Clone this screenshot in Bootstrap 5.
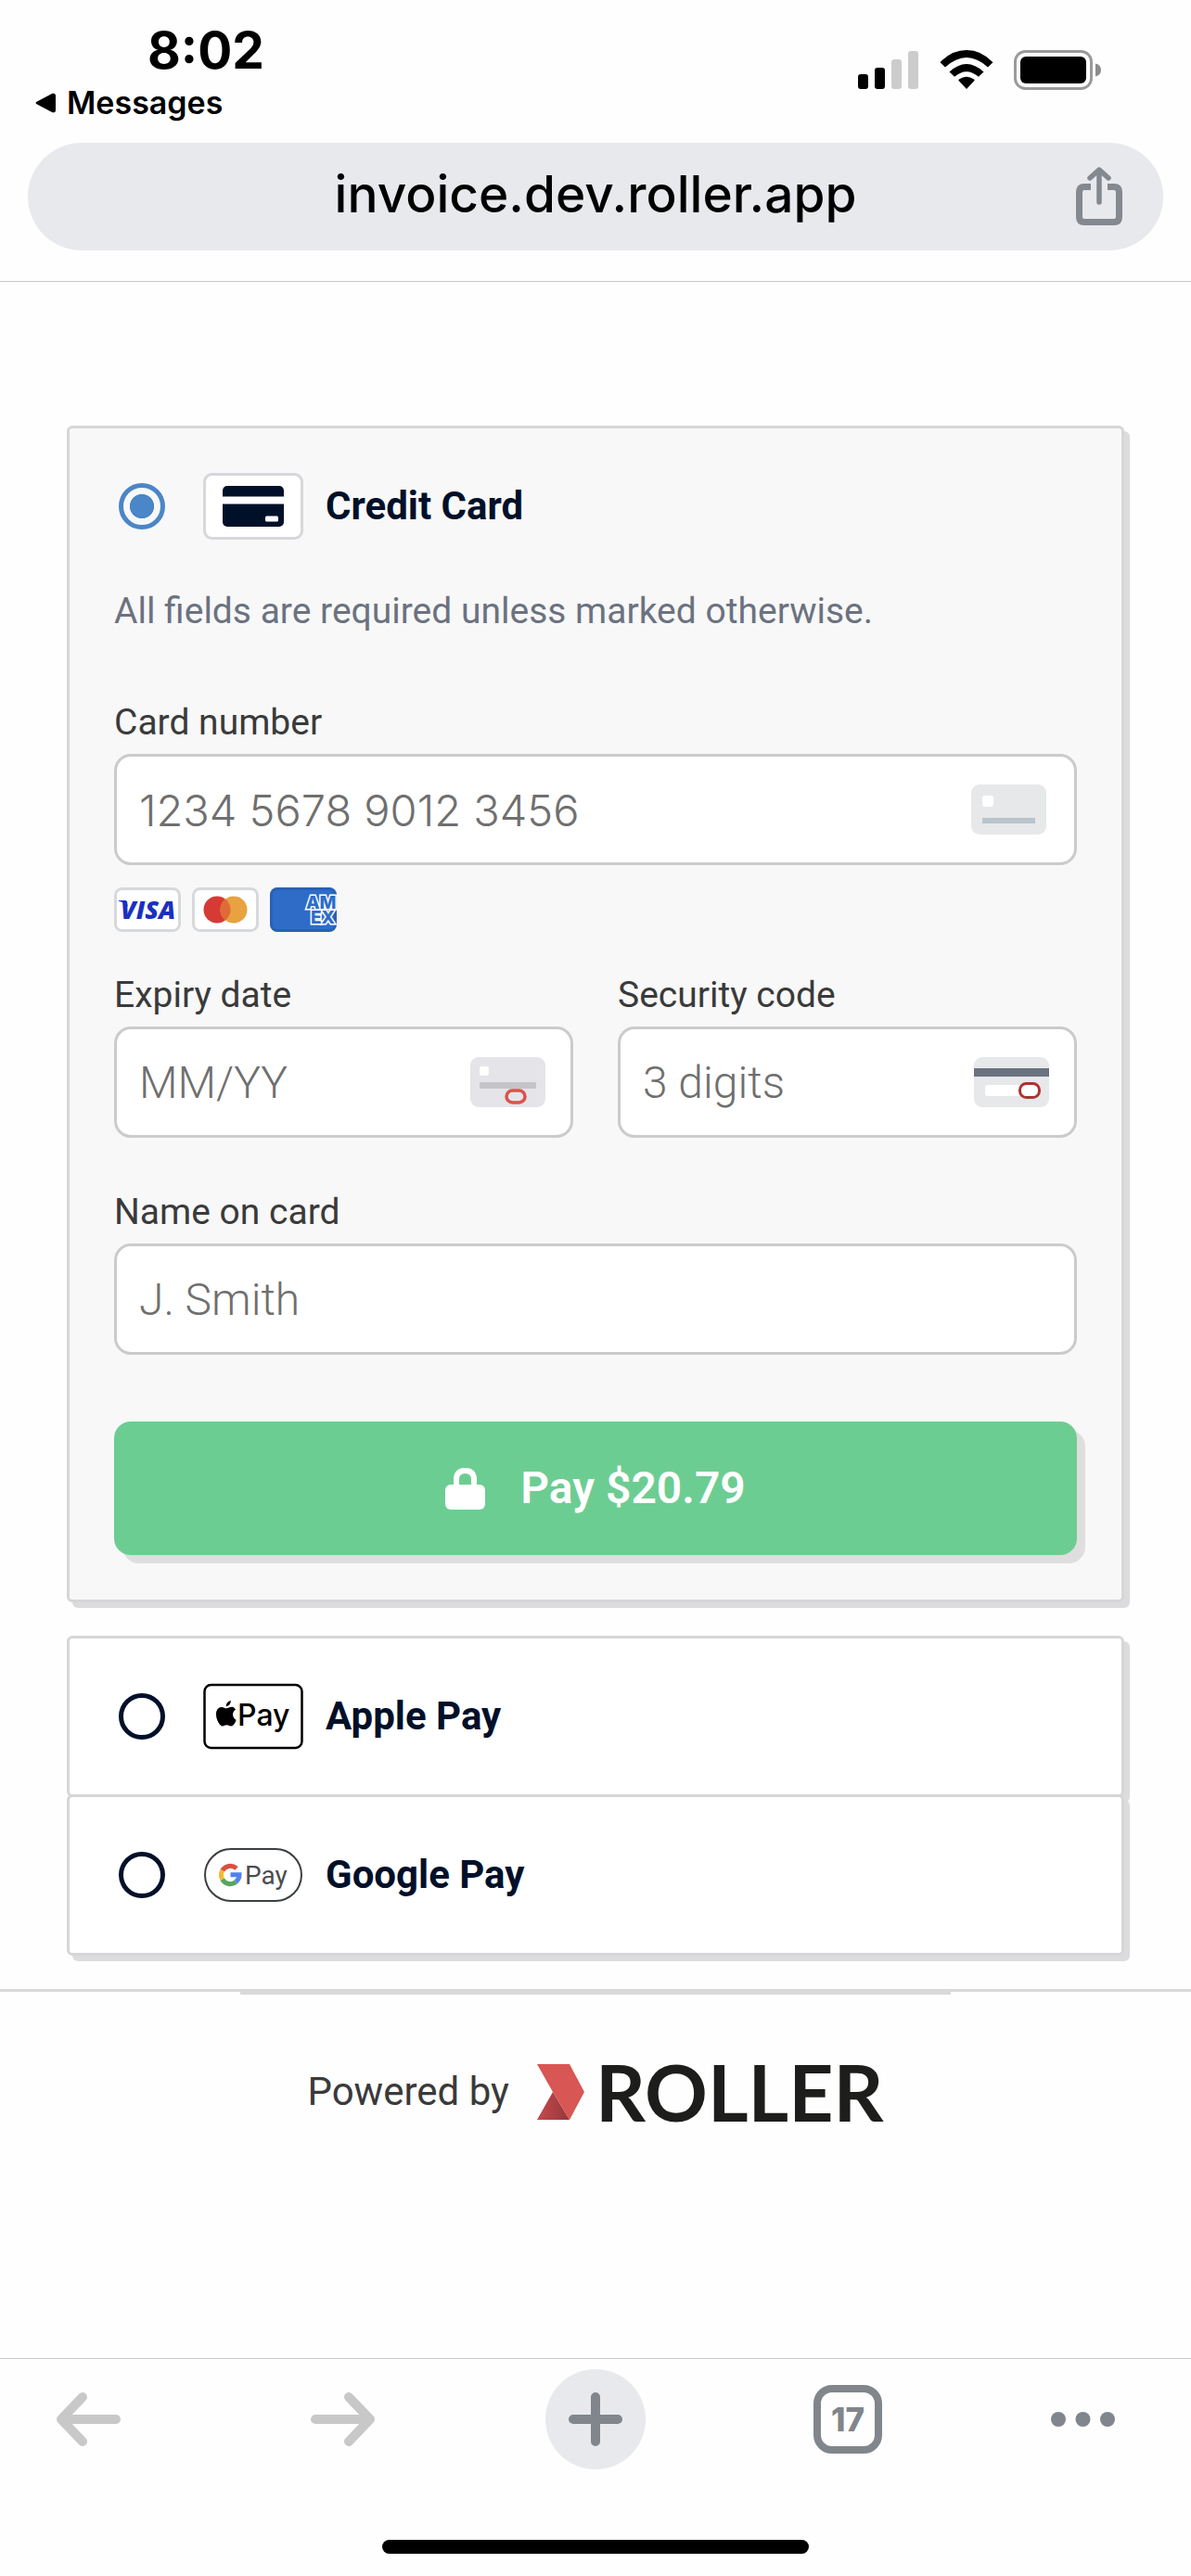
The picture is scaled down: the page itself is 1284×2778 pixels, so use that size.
<!DOCTYPE html>
<html lang="en">
<head>
<meta charset="utf-8">
<meta name="viewport" content="width=device-width, initial-scale=1">
<title>Invoice payment</title>
<link href="https://cdn.jsdelivr.net/npm/bootstrap@5.3.0/dist/css/bootstrap.min.css" rel="stylesheet">
<style>
  body { font-family: Roboto, "Noto Sans", sans-serif; color: #3a3a3a; background: #fefefe; }
  .ui-font { font-family: Inter, "Liberation Sans", sans-serif; color: #000; }

  /* phone status bar and address bar */
  .phone-top { border-bottom: 1px solid #c8c8c8; padding-bottom: 33px; }
  .status-bar { padding: 20px 96px 20px 38px; }
  .status-time { font-size: 55px; line-height: 68px; font-weight: 700; padding-left: 121px; }
  .status-back { font-size: 34px; line-height: 46px; font-weight: 600; gap: 11px; color: #000; }
  .status-icons { gap: 22px; padding-top: 34px; }
  .address-pill { background: #e8e9ed; height: 116px; margin: 0 30px; padding: 0 44px; }
  .address-text { font-size: 55px; line-height: 68px; font-weight: 500; padding: 0 0 6px 50px; }

  /* payment panels */
  .checkout { padding: 155px 72px 36px; }
  .pay-panel { border: 3px solid #d6d6d6; border-radius: 6px; box-shadow: 6px 6px 0 #dcdcde; background: #fff; padding: 48px; }
  .pay-panel.active { background: #f8f8f8; margin-bottom: 36px; }
  .joined + .joined { margin-top: -3px; }
  .method { height: 72px; padding-left: 5px; color: #001029; font-size: 42px; line-height: 60px; font-weight: 700; }
  .method .form-check-input { width: 50px; height: 50px; border: 5px solid #001029; background: transparent; margin: 0 41px 0 0; }
  .method .form-check-input:checked { border-color: #4a86c8; background: radial-gradient(circle closest-side, #4a86c8 64%, transparent 67%) padding-box; }
  .method svg { margin-right: 24px; }
  .note { font-size: 39px; line-height: 58px; color: #6b7280; margin: 48px 0 62px; }
  .field-label { font-size: 39px; line-height: 58px; margin-bottom: 5px; display: block; }
  .field { height: 120px; border: 3px solid #cbcbcd; border-radius: 18px; padding: 0 24px; font-size: 48px; font-weight: 300; background: #fff; }
  .field::placeholder { color: #6f6f6f; opacity: 1; }
  .field-digits { font-family: Inter, sans-serif; font-size: 47px; }
  .field-icon { position: absolute; right: 30px; top: 33px; }
  .brands { gap: 12px; margin: 24px 0 39px; }
  .pair { gap: 48px; margin-bottom: 51px; }
  .btn-pay { height: 144px; margin-top: 72px; border: 0; border-radius: 18px; background: #6ccd92; color: #fff; font-size: 48px; font-weight: 600; line-height: 60px; gap: 38px; box-shadow: 9px 9px 0 #dedede; }

  /* attribution */
  .divider { height: 3px; background: #d9d9d9; }
  .divider-short { width: 766px; max-width: 60%; }
  .powered { font-size: 42px; line-height: 60px; margin-top: 60px; gap: 30px; }
  .roller-logo { gap: 11px; }
  .roller-name { font-family: Lato, sans-serif; font-weight: 700; font-size: 84px; line-height: 90px; color: #1d1d1b; }

  /* browser tool bar */
  .tool-bar { border-top: 1px solid #c8c8c8; padding-top: 11px; }
  .tool-bar .btn { line-height: 0; }
  .nav-side { flex: 1 1 0; }
  .nav-left { gap: 205px; }
  .nav-left > :first-child { margin-left: 61px; }
  .nav-right { gap: 182px; }
  .nav-right > :last-child { margin-right: 82px; }
  .new-tab { width: 108px; height: 108px; background: #e8e9ed; }
  .tab-count { width: 74px; height: 74px; border: 8px solid #80868b; border-radius: 20px; color: #80868b; font-size: 35px; font-weight: 800; }
  .home-bar { width: 460px; height: 15px; background: #000; margin: 76px auto 24px; }
</style>
</head>
<body class="d-flex flex-column min-vh-100">

<header class="phone-top ui-font">
  <div class="status-bar d-flex justify-content-between">
    <div>
      <div class="status-time">8:02</div>
      <a href="#" class="status-back d-flex align-items-center text-decoration-none">
        <svg width="23" height="22" viewBox="0 0 23 22"><path d="M2 9.500 18.500.8Q22 0 22 3.500V18.500Q22 22 18.500 21.200L2 12.500Q-1 11 2 9.500Z"/></svg>Messages</a>
    </div>
    <div class="status-icons d-flex align-items-start">
      <svg width="66" height="43" viewBox="0 0 66 43"><rect y="26" width="11" height="16" rx="3"/><rect x="18" y="19" width="11" height="23" rx="3"/><rect x="36" y="10" width="11" height="32" rx="3" fill="#ccc"/><rect x="54" y="1" width="11" height="41" rx="3" fill="#ccc"/></svg>
      <svg width="58" height="43" viewBox="0 0 58 43"><path d="M29 42 20.500 33Q20 32 21 31.500 29 26 37 31.500 38 32 37.500 33Z"/><path d="M10.500 23.500Q29 6.500 47.500 23.500L42 28.800Q29 17.500 16 28.800Z"/><path d="M.5 13.300Q13 0 29 0T57.500 13.300L52 18.500Q29-2.500 6 18.500Z"/></svg>
      <svg width="95" height="43" viewBox="0 0 95 43"><rect x="1.500" y="1.500" width="82" height="40" rx="11" fill="none" stroke="#9a9a9a" stroke-width="3"/><rect x="7" y="7" width="71" height="29" rx="6"/><path d="M88 14.500Q94 16 94 21.500T88 28.500Z" fill="#8c8c8c"/></svg>
    </div>
  </div>
  <div class="address-pill rounded-pill d-flex align-items-center">
    <div class="address-text flex-grow-1 text-center">invoice.dev.roller.app</div>
    <button class="btn p-0 border-0 lh-1" type="button" aria-label="Share">
      <svg width="50" height="64" viewBox="0 0 50 64" fill="none" stroke="#84888f" stroke-width="7"><path d="M16 21.500H9Q3.500 21.500 3.500 27V54Q3.500 59.500 9 59.500H41Q46.500 59.500 46.500 54V27Q46.500 21.500 41 21.500H34"/><path d="M25 38V4M15 12 25 3 35 12" stroke-width="5.500" stroke-linecap="round" stroke-linejoin="round"/></svg>
    </button>
  </div>
</header>

<main>
  <form class="checkout">
    <section class="pay-panel active">
      <label class="method d-flex align-items-center">
        <input class="form-check-input flex-shrink-0" type="radio" name="method" checked>
        <svg width="108" height="72" viewBox="0 0 108 72"><rect x="1.500" y="1.500" width="105" height="69" rx="8" fill="#fff" stroke="#d6d7da" stroke-width="3"/><rect x="21" y="14" width="66" height="44" rx="5" fill="#001029"/><path d="M21 25.500H87V33.500H21Z" fill="#fff"/><rect x="67" y="46.500" width="14" height="6" rx="1.500" fill="#fff"/></svg>
        Credit Card
      </label>
      <p class="note">All fields are required unless marked otherwise.</p>

      <label class="field-label" for="number">Card number</label>
      <div class="position-relative">
        <input class="form-control field field-digits" id="number" type="text" placeholder="1234 5678 9012 3456">
        <svg class="field-icon" width="84" height="54" viewBox="0 0 84 54"><rect width="81" height="54" rx="9" fill="#e6e8ea"/><rect x="12" y="12" width="12" height="12" rx="3" fill="#fff"/><path d="M12 36H69V42H12Z" fill="#b9c4cb"/></svg>
      </div>
      <div class="brands d-flex">
        <svg width="72" height="48" viewBox="0 0 72 48"><rect x="1.500" y="1.500" width="69" height="45" rx="7" fill="#fff" stroke="#d6d9dc" stroke-width="3"/><path d="M5 14H13L15 21Q12 16.500 5 14.800Z" fill="#1b30c0"/><text x="7" y="34" font-family="Open Sans, sans-serif" font-size="27" font-weight="800" font-style="italic" fill="#1b30c0">VISA</text></svg>
        <svg width="72" height="48" viewBox="0 0 72 48"><rect x="1.500" y="1.500" width="69" height="45" rx="7" fill="#fff" stroke="#d6d9dc" stroke-width="3"/><circle cx="27" cy="24" r="14.500" fill="#d63a34"/><circle cx="45" cy="24" r="14.500" fill="#e8a241"/><path d="M36 12.600A14.500 14.500 0 0 1 36 35.400 14.500 14.500 0 0 1 36 12.600Z" fill="#e06a38"/></svg>
        <svg width="72" height="48" viewBox="0 0 72 48"><defs><clipPath id="amex"><rect width="72" height="48" rx="8"/></clipPath></defs><g clip-path="url(#amex)"><rect width="72" height="48" fill="#2f6cc8"/><rect x="1.500" y="1.500" width="69" height="45" rx="7" fill="none" stroke="#2a61b4" stroke-width="3"/><text font-family="Inter, sans-serif" font-size="19" font-weight="800" fill="#2f6cc8" stroke="#fff" stroke-width="3" paint-order="stroke"><tspan x="39" y="23">AM</tspan><tspan x="44" y="39">EX</tspan></text></g></svg>
      </div>

      <div class="pair d-flex">
        <div class="flex-fill w-50">
          <label class="field-label" for="expiry">Expiry date</label>
          <div class="position-relative">
            <input class="form-control field" id="expiry" type="text" placeholder="MM/YY">
            <svg class="field-icon" width="81" height="54" viewBox="0 0 81 54"><rect width="81" height="54" rx="9" fill="#e4e4e9"/><rect x="10" y="10" width="10" height="10" rx="2" fill="#fff"/><rect x="10" y="27" width="61" height="7" rx="1.500" fill="#c4c4c9"/><rect x="39" y="36" width="20" height="13" rx="6.500" fill="none" stroke="#d9534a" stroke-width="3.500"/></svg>
          </div>
        </div>
        <div class="flex-fill w-50">
          <label class="field-label" for="cvc">Security code</label>
          <div class="position-relative">
            <input class="form-control field" id="cvc" type="text" placeholder="3 digits">
            <svg class="field-icon" width="81" height="54" viewBox="0 0 81 54"><rect width="81" height="54" rx="9" fill="#e6e8ea"/><path d="M0 12H81V21H0Z" fill="#6b7280"/><rect x="12" y="30" width="44" height="12" rx="3" fill="#fff"/><rect x="49.500" y="28.500" width="21" height="15" rx="7" fill="#fff" stroke="#ab3530" stroke-width="3"/></svg>
          </div>
        </div>
      </div>

      <label class="field-label" for="holder">Name on card</label>
      <input class="form-control field" id="holder" type="text" placeholder="J. Smith">

      <button class="btn btn-pay w-100 d-flex align-items-center justify-content-center" type="submit">
        <svg width="43" height="45" viewBox="0 0 43 45"><rect y="18" width="43" height="27" rx="6" fill="#fff"/><path d="M12 20V12.500Q12 3 21.500 3T31 12.500V20" fill="none" stroke="#fff" stroke-width="6"/></svg>
        Pay $20.79
      </button>
    </section>

    <section class="pay-panel joined">
      <label class="method d-flex align-items-center">
        <input class="form-check-input flex-shrink-0" type="radio" name="method">
        <svg width="108" height="72" viewBox="0 0 108 72"><rect x="1.500" y="2" width="105" height="68" rx="7" fill="#fff" stroke="#000" stroke-width="2.500"/><g transform="translate(14 19)"><path d="M17.500 6.800C14.500 6.600 13 8.300 11.200 8.300 9.500 8.300 8 6.800 5.800 6.900 2.500 7 0 9.800 0 14.700 0 20.500 3.800 27.500 7 27.500 8.600 27.500 9.300 26.300 11.400 26.300 13.500 26.300 14.100 27.500 15.800 27.500 18.500 27.500 20.900 23.500 21.600 20.700 17 18.500 17 12 21 9.800 20 7.700 18.500 6.900 17.500 6.800ZM15.800 0C16 3 13.700 6 10.800 6.200 10.500 3.300 13.200.3 15.800 0Z"/></g><text x="37" y="46" font-family="Inter, sans-serif" font-size="32" font-weight="500" fill="#000">Pay</text></svg>
        Apple Pay
      </label>
    </section>
    <section class="pay-panel joined">
      <label class="method d-flex align-items-center">
        <input class="form-check-input flex-shrink-0" type="radio" name="method">
        <svg width="108" height="72" viewBox="0 0 108 72"><rect x="2" y="8" width="104" height="56" rx="28" fill="#fff" stroke="#3c4043" stroke-width="2"/><g transform="translate(17 23.500)" fill="none" stroke-width="5"><path d="M19 5.500A9.800 9.800 0 0 0 3.700 7.800" stroke="#d9503f"/><path d="M3.700 7.800A9.800 9.800 0 0 0 3.700 17.200" stroke="#f2b93b"/><path d="M3.700 17.200A9.800 9.800 0 0 0 18.300 20" stroke="#57a55a"/><path d="M18.300 20Q22 17 22 12.300H12.500" stroke="#5083ec"/></g><text x="45" y="46" font-family="Roboto, sans-serif" font-size="28" font-weight="400" fill="#4a4d50">Pay</text></svg>
        Google Pay
      </label>
    </section>
  </form>

  <div class="divider"></div>
  <div class="divider divider-short mx-auto"></div>
  <div class="powered d-flex justify-content-center align-items-center">
    Powered by
    <a href="#" class="roller-logo d-flex align-items-center text-decoration-none">
      <svg width="52" height="60" viewBox="0 0 52 60"><defs><linearGradient id="fold" x1="0" y1="0" x2="1" y2="0"><stop offset="0" stop-color="#c8484c"/><stop offset="1" stop-color="#93383c"/></linearGradient></defs><path d="M0 60 17 30 35 60Z" fill="url(#fold)"/><path d="M0 0H35L51 30 35 60 17 30Z" fill="#d85654"/></svg>
      <span class="roller-name">ROLLER</span>
    </a>
  </div>
</main>

<footer class="mt-auto">
  <div class="tool-bar ui-font d-flex align-items-center">
    <div class="nav-side nav-left d-flex">
      <button class="btn p-0 border-0" type="button" aria-label="Back"><svg width="69" height="58" viewBox="0 0 69 58" fill="none" stroke="#c8c8c8" stroke-width="10" stroke-linecap="round" stroke-linejoin="round"><path d="M28 5 5 29 28 53M7 29H64"/></svg></button>
      <button class="btn p-0 border-0" type="button" aria-label="Forward"><svg width="69" height="58" viewBox="0 0 69 58" fill="none" stroke="#c8c8c8" stroke-width="10" stroke-linecap="round" stroke-linejoin="round"><path d="M41 5 64 29 41 53M62 29H5"/></svg></button>
    </div>
    <button class="btn new-tab rounded-circle p-0 border-0" type="button" aria-label="New tab"><svg width="58" height="58" viewBox="0 0 58 58" stroke="#80868b" stroke-width="10" stroke-linecap="round"><path d="M29 5V53M5 29H53"/></svg></button>
    <div class="nav-side nav-right d-flex justify-content-end align-items-center">
      <button class="btn tab-count p-0" type="button">17</button>
      <button class="btn p-0 border-0" type="button" aria-label="More"><svg width="69" height="18" viewBox="0 0 69 18" fill="#80868b"><circle cx="8" cy="9" r="8"/><circle cx="34.500" cy="9" r="8"/><circle cx="61" cy="9" r="8"/></svg></button>
    </div>
  </div>
  <div class="home-bar rounded-pill"></div>
</footer>

<script src="https://cdn.jsdelivr.net/npm/bootstrap@5.3.0/dist/js/bootstrap.bundle.min.js"></script>
</body>
</html>
